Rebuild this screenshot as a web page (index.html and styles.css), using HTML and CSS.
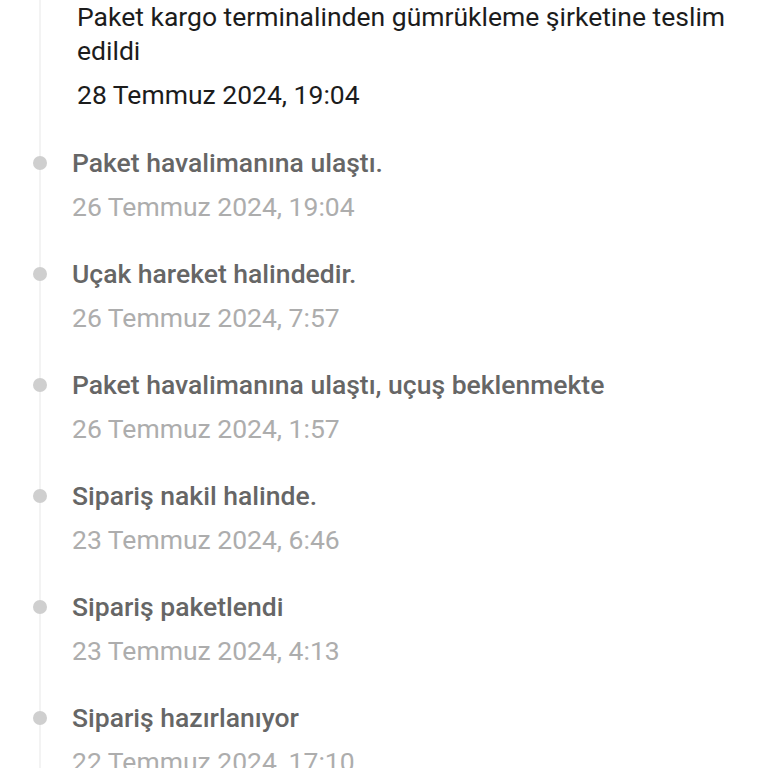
FILE: index.html
```html
<!DOCTYPE html>
<html lang="tr">
<head>
    <meta charset="UTF-8">
    <meta name="viewport" content="width=device-width, initial-scale=1.0">
    <title>Kargo Takibi</title>
    <link rel="stylesheet" href="styles.css">
</head>
<body>
    <ul class="timeline">
        <li class="event current">
            <div class="event-title">Paket kargo terminalinden gümrükleme şirketine teslim edildi</div>
            <div class="event-date">28 Temmuz 2024, 19:04</div>
        </li>
        <li class="event">
            <div class="event-title">Paket havalimanına ulaştı.</div>
            <div class="event-date">26 Temmuz 2024, 19:04</div>
        </li>
        <li class="event">
            <div class="event-title">Uçak hareket halindedir.</div>
            <div class="event-date">26 Temmuz 2024, 7:57</div>
        </li>
        <li class="event">
            <div class="event-title">Paket havalimanına ulaştı, uçuş beklenmekte</div>
            <div class="event-date">26 Temmuz 2024, 1:57</div>
        </li>
        <li class="event">
            <div class="event-title">Sipariş nakil halinde.</div>
            <div class="event-date">23 Temmuz 2024, 6:46</div>
        </li>
        <li class="event">
            <div class="event-title">Sipariş paketlendi</div>
            <div class="event-date">23 Temmuz 2024, 4:13</div>
        </li>
        <li class="event">
            <div class="event-title">Sipariş hazırlanıyor</div>
            <div class="event-date">22 Temmuz 2024, 17:10</div>
        </li>
    </ul>
</body>
</html>
```

FILE: styles.css
```css
* {
    margin: 0;
    padding: 0;
    box-sizing: border-box;
}

body {
    font-family: Roboto, 'Noto Sans', sans-serif;
    background-color: #fff;
    height: 768px;
    overflow: hidden;
}

/* Vertical track */
.timeline {
    list-style: none;
    margin-left: 39px;
    padding-left: 31px;
    padding-right: 30px;
    border-left: 2px solid #f3f3f3;
}

.event {
    position: relative;
    margin-bottom: 33px;
}

/* Dot on the track */
.event::before {
    content: '';
    position: absolute;
    left: -39px;
    top: 10px;
    width: 14px;
    height: 14px;
    border-radius: 50%;
    background-color: #cfcfcf;
}

.event-title {
    font-size: 26.5px;
    line-height: 34px;
    font-weight: 500;
    color: #666;
}

.event-date {
    margin-top: 10px;
    font-size: 26.5px;
    line-height: 34px;
    color: #adadad;
}

/* Latest event */
.current {
    padding-left: 5px;
    margin-bottom: 34px;
}

.current::before {
    display: none;
}

.current .event-title,
.current .event-date {
    font-weight: 400;
    color: #1c1c1c;
}
```
